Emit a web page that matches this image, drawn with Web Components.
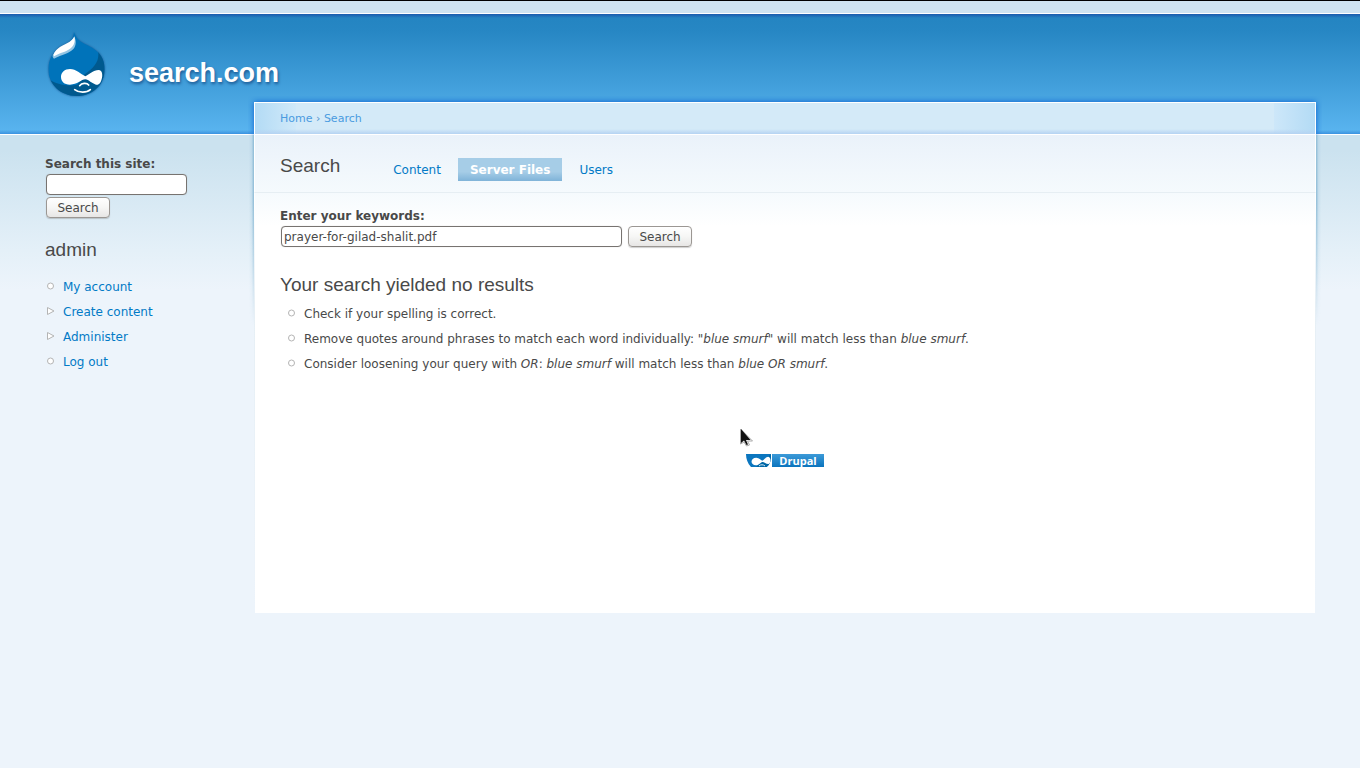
<!DOCTYPE html>
<html lang="en">
<head>
<meta charset="utf-8">
<title>Search | search.com</title>
<style>
  body {
    margin: 0;
    font: 12px/20px "DejaVu Sans", Verdana, sans-serif;
    color: #494949;
    background: #edf5fa;
  }
</style>
</head>
<body>
<garland-page>
  <site-header slot="header" href="#">search.com</site-header>

  <search-form slot="sidebar" label="Search this site:" stacked></search-form>
  <side-block slot="sidebar" heading="admin">
    <bullet-item href="#">My account</bullet-item>
    <bullet-item href="#" type="collapsed">Create content</bullet-item>
    <bullet-item href="#" type="collapsed">Administer</bullet-item>
    <bullet-item href="#">Log out</bullet-item>
  </side-block>

  <bread-crumb slot="crumb"></bread-crumb>
  <tab-bar slot="tabs" heading="Search">
    <tab-link href="#">Content</tab-link>
    <tab-link href="#" active>Server Files</tab-link>
    <tab-link href="#">Users</tab-link>
  </tab-bar>

  <search-form label="Enter your keywords:" value="prayer-for-gilad-shalit.pdf"></search-form>
  <search-results heading="Your search yielded no results">
    <bullet-item>Check if your spelling is correct.</bullet-item>
    <bullet-item>Remove quotes around phrases to match each word individually: <em>"blue smurf"</em> will match less than <em>blue smurf</em>.</bullet-item>
    <bullet-item>Consider loosening your query with <em>OR</em>: <em>blue smurf</em> will match less than <em>blue OR smurf</em>.</bullet-item>
  </search-results>
  <drupal-badge></drupal-badge>
</garland-page>
<mouse-pointer></mouse-pointer>

<script>
const define = (name, render) => {
  customElements.define(name, class extends HTMLElement {
    constructor() {
      super();
      this.attachShadow({ mode: "open" });
      this.shadowRoot.innerHTML = render(this);
    }
  });
};

define("garland-page", () => `
  <style>
    :host {
      display: block;
      min-height: 100vh;
      background: linear-gradient(#cbe2ef 135px, #cbe2ef 150px, #e4f0f8 250px, #edf4fb 290px);
    }
    .columns { display: flex; align-items: flex-start; margin: -33px 39px 0 45px; }
    aside { flex: 0 0 204px; padding-top: 52px; }
    .edge {
      flex: 0 0 5px;
      height: 190px;
      margin-top: 33px;
      background: linear-gradient(to left, #8dbbd6, #a5cbe155 50%, #a5cbe100);
      -webkit-mask-image: linear-gradient(#000 35%, transparent);
      mask-image: linear-gradient(#000 35%, transparent);
    }
    .edge.right { background: linear-gradient(to right, #8dbbd6, #a5cbe155 50%, #a5cbe100); }
    main {
      flex: 1;
      min-width: 0;
      background:
        linear-gradient(#fff 100px, #e6eff5 200px, #edf4fb) left / 1px 100% no-repeat,
        linear-gradient(#fff 100px, #e6eff5 200px, #edf4fb) right / 1px 100% no-repeat,
        linear-gradient(#eaf2fa 33px, #f5fafd 90px, #fff 124px);
    }
    .content { padding: 13px 26px 146px; }
  </style>
  <slot name="header"></slot>
  <div class="columns">
    <aside><slot name="sidebar"></slot></aside>
    <span class="edge"></span>
    <main>
      <slot name="crumb"></slot>
      <slot name="tabs"></slot>
      <div class="content"><slot></slot></div>
    </main>
    <span class="edge right"></span>
  </div>
`);

define("site-header", el => `
  <style>
    :host { display: block; border-top: 1px solid #000; }
    .top { height: 12px; background: #cee3f1; }
    header {
      height: 120px;
      box-sizing: content-box;
      border: solid #fff;
      border-width: 1px 0;
      background:
        linear-gradient(#1a5bae, #1a5bae00) top / 100% 4px no-repeat,
        linear-gradient(#2f83da00, #3b92e0) bottom / 100% 4px no-repeat,
        linear-gradient(#2384c1, #2787c4 15%, #5ab5f0);
    }
    a {
      display: inline-flex;
      align-items: flex-end;
      gap: 24px;
      padding: 18px 0 0 48px;
      color: #fff;
      text-decoration: none;
      font: bold 27px/48px "Liberation Sans", Helvetica, sans-serif;
      text-shadow: 1px 2px 3px #1c5a94;
    }
    svg { display: block; filter: drop-shadow(0 0 1px #1c5a94); }
  </style>
  <div class="top"></div>
  <header>
    <a href="${el.getAttribute("href")}">
      <svg width="57" height="65" viewBox="0 0 171 195" aria-hidden="true">
        <defs><clipPath id="drop"><path d="M78 0C83 12 86 20 97 28C110 37 130 44 145 56C162 70 170 90 170 111C170 160 133 192 86 192C38 192 1 157 1 112C1 85 12 66 28 53C43 41 60 37 69 26C76 18 77 8 78 0Z"/></clipPath></defs>
        <g clip-path="url(#drop)">
          <path fill="#0073ba" d="M0 0h171v195H0z"/>
          <path fill="#00598e" d="M150 56C156 88 138 108 108 128L88 158C58 164 26 158 4 142L10 195H171V60Z"/>
          <path fill="#93c5e4" d="M79 14C86 28 84 42 76 51C64 64 42 68 18 80C10 74 14 62 28 51C46 37 74 31 79 14Z"/>
        </g>
        <path fill="#fff" d="M79 13C82 25 80 37 72 45C60 59 38 61 18 73C15 67 21 57 31 49C46 37 73 31 79 13Z"/>
        <path fill="#fff" d="M66 111C84 111 98 126 112 133C124 127 136 114 152 114C162 114 164 127 162 137C159 152 153 160 144 158C132 155 122 143 112 142C100 142 88 158 66 158C48 158 39 148 39 135C39 121 50 111 66 111Z"/>
        <g fill="none" stroke="#fff" stroke-width="5" stroke-linecap="round">
          <path d="M95 161C101 153 116 151 122 159"/>
          <path d="M80 173C92 183 116 183 127 173"/>
        </g>
      </svg>
      <slot></slot>
    </a>
  </header>
`);

define("search-form", el => `
  <style>
    :host { display: block; }
    label { display: block; font-weight: bold; }
    .row { display: flex; flex-wrap: wrap; gap: 2px 6px; padding-left: 1px; }
    input, button {
      box-sizing: border-box;
      height: 21px;
      margin: 0;
      border-radius: 4px;
      color: inherit;
      font: inherit;
    }
    input {
      width: 341px;
      padding: 0 2px;
      border: 1px solid #777370;
      background: #fff;
      box-shadow: 0 0 1px #8888;
    }
    button {
      width: 64px;
      padding: 0;
      border: 1px solid #9b9793;
      background: linear-gradient(#fff, #f6f6f5 50%, #e7e6e5);
      line-height: 18px;
      box-shadow: 0 1px 1px #8886;
    }
    :host([stacked]) .row { flex-direction: column; }
    :host([stacked]) input { width: 141px; }
  </style>
  <form>
    <label for="keys">${el.getAttribute("label")}</label>
    <div class="row">
      <input id="keys" type="text" value="${el.getAttribute("value") || ""}">
      <button type="button">Search</button>
    </div>
  </form>
`);

define("side-block", el => `
  <style>
    :host { display: block; padding-top: 20px; }
    h2 { margin: 0 0 15px; font: 19px/24px "Liberation Sans", Helvetica, sans-serif; }
  </style>
  <h2>${el.getAttribute("heading")}</h2>
  <nav><slot></slot></nav>
`);

define("bullet-item", el => {
  const href = el.getAttribute("href");
  const shape = el.getAttribute("type") === "collapsed"
    ? `<path d="M2.5 1.5L9 5L2.5 8.5Z"/>`
    : `<circle cx="5.5" cy="5" r="3"/>`;
  return `
  <style>
    :host { display: flex; gap: 7px; padding-bottom: 5px; }
    svg { flex: none; margin-top: 4px; fill: #fff; stroke: #b4b4b4; stroke-linejoin: round; }
    a { color: #027ac6; text-decoration: none; }
  </style>
  <svg width="11" height="10" viewBox="0 0 11 10" aria-hidden="true">${shape}</svg>
  ${href ? `<a href="${href}"><slot></slot></a>` : `<span><slot></slot></span>`}
`;
});

define("bread-crumb", () => `
  <style>
    :host {
      display: block;
      padding: 5px 25px;
      border: 1px solid #fff;
      font-size: 11px;
      line-height: 21px;
      color: #5294cf;
      background:
        linear-gradient(#a9cdf000, #b5d3f2) bottom / 100% 5px no-repeat,
        linear-gradient(to right, #b3dbf5, #d0e9f9) left / 41px 100% no-repeat,
        linear-gradient(to left, #b3dbf5, #cde7f9) right / 41px 100% no-repeat,
        #d4eaf8;
      box-shadow: 0 0 6px #0a5fd0;
      clip-path: inset(-6px -6px 0);
    }
    a { color: #4a9be0; text-decoration: none; }
  </style>
  <a href="#">Home</a> › <a href="#">Search</a>
`);

define("tab-bar", el => `
  <style>
    :host {
      display: flex;
      align-items: flex-end;
      gap: 41px;
      padding: 19px 25px 11px;
      border: solid #e6eef3;
      border-width: 0 1px 1px;
      border-left-color: #fff;
      border-right-color: #fff;
    }
    h2 { margin: 0 0 3px; font: 19px/24px "Liberation Sans", Helvetica, sans-serif; }
    nav { display: flex; gap: 5px; }
  </style>
  <h2>${el.getAttribute("heading")}</h2>
  <nav><slot></slot></nav>
`);

define("tab-link", el => `
  <style>
    :host { display: block; }
    a { display: block; padding: 1px 12px 0; line-height: 22px; color: #027ac6; text-decoration: none; }
    :host([active]) a {
      color: #fff;
      font-weight: bold;
      background: linear-gradient(#a6cde7 60%, #7fb3d8);
    }
  </style>
  <a href="${el.getAttribute("href")}"><slot></slot></a>
`);

define("search-results", el => `
  <style>
    :host { display: block; padding-top: 26px; }
    h2 { margin: 0 0 7px; font: 19px/24px "Liberation Sans", Helvetica, sans-serif; }
    div { padding-left: 6px; }
  </style>
  <h2>${el.getAttribute("heading")}</h2>
  <div><slot></slot></div>
`);

define("drupal-badge", () => `
  <style>
    :host { display: flex; justify-content: center; padding-top: 75px; }
    a {
      display: flex;
      gap: 1px;
      color: #fff;
      text-decoration: none;
      font: bold 11px/13px "Open Sans", sans-serif;
    }
    svg { display: block; }
    span { width: 52px; text-align: center; background: linear-gradient(#3c9ad8, #0b74bd); }
  </style>
  <a href="#">
    <svg width="25" height="13" viewBox="0 0 75 39" aria-hidden="true">
      <path fill="#0b76bf" d="M0 0H75V12C74 24 70 33 62 39H15C5 29 0 15 0 0Z"/>
      <path fill="#0067a6" d="M75 0V12C74 24 70 33 62 39H30L44 24C56 16 68 8 75 0Z"/>
      <path fill="#fff" d="M31 11C40 11 44 18 49 20C55 17 59 8 67 8C76 9 75 29 67 30C59 30 56 24 49 24C43 25 40 34 30 34C12 34 12 11 31 11Z"/>
      <path fill="none" stroke="#d9ebf7" stroke-width="3" d="M39 36C44 31 52 31 57 36"/>
    </svg>
    <span>Drupal</span>
  </a>
`);

define("mouse-pointer", () => `
  <style>
    :host { position: absolute; left: 740px; top: 428px; pointer-events: none; }
    svg { display: block; overflow: visible; }
  </style>
  <svg width="13" height="20" viewBox="0 0 13 20" aria-hidden="true">
    <path fill="#fff" stroke="#aaa" d="M.5 1V16L4 14L6.500 18L9.500 17L7.500 13H12.500Z"/>
    <path fill="#111" d="M1 1V15L4 12.500L6.500 17L8 16.500L6 12H10.500Z"/>
  </svg>
`);
</script>
</body>
</html>
